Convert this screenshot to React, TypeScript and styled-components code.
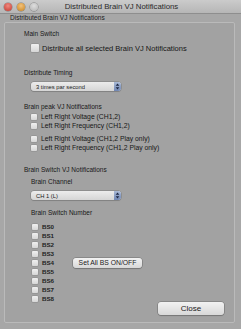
import React from "react";
import styled, { createGlobalStyle } from "styled-components";

const Global = createGlobalStyle`
  html, body { margin: 0; padding: 0; background: #a6a6a6; }
  body { font-family: "Liberation Sans", Arial, sans-serif; color: #1c1c1c; }
`;

const Window = styled.div`
  width: 241px;
  height: 329px;
  display: flex;
  flex-direction: column;
  background: #a7a7a7;
  overflow: hidden;
`;

const TitleBar = styled.div`
  height: 13px;
  display: flex;
  align-items: center;
  position: relative;
  background: linear-gradient(#cbcbcb, #b6b6b6);
  border-bottom: 1px solid #8e8e8e;
  padding-left: 4px;
  gap: 5px;
`;

const Light = styled.span<{ $c: string; $e: string }>`
  width: 8px;
  height: 8px;
  border-radius: 50%;
  background: radial-gradient(circle at 50% 35%, ${(p) => p.$c} 0%, ${(p) => p.$e} 100%);
  box-shadow: 0 0 0 0.5px rgba(60, 60, 60, 0.5);
`;

const Title = styled.div`
  position: absolute;
  left: 0;
  right: 0;
  top: 0;
  height: 13px;
  line-height: 13px;
  text-align: center;
  font-size: 7.8px;
  color: #2a2a2a;
  padding-left: 2px;
`;

const Body = styled.div`
  flex: 1;
  display: flex;
  flex-direction: column;
  padding: 0 6px 6px 4px;
`;

const GroupLabel = styled.div`
  font-size: 6.5px;
  line-height: 8px;
  padding-left: 6px;
  color: #222;
`;

const GroupBox = styled.div`
  flex: 1;
  display: flex;
  flex-direction: column;
  border: 1px solid #bababa;
  border-radius: 2px;
  background: #a2a2a2;
  padding: 6px 10px 5px 19px;
`;

const SectionTitle = styled.div<{ $mt?: number; $indent?: number }>`
  font-size: 6.5px;
  line-height: 10px;
  height: 10px;
  margin-top: ${(p) => p.$mt ?? 0}px;
  padding-left: ${(p) => p.$indent ?? 0}px;
  color: #181818;
`;

const CheckRow = styled.label<{ $mt?: number; $big?: boolean; $indent?: number }>`
  display: flex;
  align-items: center;
  gap: ${(p) => (p.$big ? 3 : 4)}px;
  height: ${(p) => (p.$big ? 10 : 9)}px;
  margin-top: ${(p) => p.$mt ?? 0}px;
  padding-left: ${(p) => p.$indent ?? 7}px;
  font-size: ${(p) => (p.$big ? 7.5 : 6.8)}px;
  color: #161616;
`;

const Box = styled.span<{ $big?: boolean }>`
  width: ${(p) => (p.$big ? 8 : 6)}px;
  height: ${(p) => (p.$big ? 8 : 6)}px;
  flex: none;
  border-radius: 1px;
  background: linear-gradient(#f0f0f0, #d6d6d6);
  box-shadow: 0 0 0 0.5px #8a8a8a;
`;

const Popup = styled.div<{ $mt?: number }>`
  width: 90px;
  height: 9px;
  margin-top: ${(p) => p.$mt ?? 0}px;
  margin-left: 7px;
  display: flex;
  align-items: center;
  border-radius: 3px;
  background: linear-gradient(#ececec, #d5d5d5);
  box-shadow: 0 0 0 0.5px #7a7a7a, 0 1px 1px rgba(0, 0, 0, 0.15);
  overflow: hidden;
`;

const PopupText = styled.span`
  flex: 1;
  font-size: 5.8px;
  padding-left: 5px;
  color: #1a1a1a;
`;

const Stepper = styled.span`
  width: 7px;
  height: 9px;
  background: linear-gradient(#a9b9d6, #6f86b3);
  display: flex;
  align-items: center;
  justify-content: center;
`;

const Group = styled.div<{ $mt?: number }>`
  display: flex;
  flex-direction: column;
  margin-top: ${(p) => p.$mt ?? 0}px;
`;

const SwitchArea = styled.div`
  display: flex;
  align-items: center;
  margin-top: 4px;
`;

const BSList = styled.div`
  display: flex;
  flex-direction: column;
  width: 49px;
`;

const BSRow = styled(CheckRow)`
  font-weight: bold;
  font-size: 6.2px;
  color: #222;
`;

const PushButton = styled.button<{ $w: number; $h: number; $fs: number }>`
  width: ${(p) => p.$w}px;
  height: ${(p) => p.$h}px;
  padding: 0;
  border: none;
  border-radius: 3px;
  font-family: "Liberation Sans", Arial, sans-serif;
  font-size: ${(p) => p.$fs}px;
  color: #1a1a1a;
  background: linear-gradient(#f2f2f2, #d8d8d8);
  box-shadow: 0 0 0 0.5px #6f6f6f, 0 1px 1px rgba(0, 0, 0, 0.2);
`;

const Footer = styled.div`
  display: flex;
  justify-content: flex-end;
  margin-top: -1px;
`;

const switches = ["BS0", "BS1", "BS2", "BS3", "BS4", "BS5", "BS6", "BS7", "BS8"];

function StepArrows() {
  return (
    <svg width="5" height="7" viewBox="0 0 5 7">
      <path d="M2.5 0.6 L4.3 2.8 H0.7 Z" fill="#1b2540" />
      <path d="M2.5 6.4 L4.3 4.2 H0.7 Z" fill="#1b2540" />
    </svg>
  );
}

export default function App() {
  return (
    <>
      <Global />
      <Window>
        <TitleBar>
          <Light $c="#f08a80" $e="#c2352b" />
          <Light $c="#f3c27a" $e="#c8821f" />
          <Light $c="#dedede" $e="#b2b2b2" />
          <Title>Distributed Brain VJ Notifications</Title>
        </TitleBar>
        <Body>
          <GroupLabel>Distributed Brain VJ Notifications</GroupLabel>
          <GroupBox>
            <SectionTitle>Main Switch</SectionTitle>
            <CheckRow $big $mt={4}>
              <Box $big />
              Distribute all selected Brain VJ Notifications
            </CheckRow>

            <SectionTitle $mt={15}>Distribute Timing</SectionTitle>
            <Popup $mt={4}>
              <PopupText>3 times par second</PopupText>
              <Stepper>
                <StepArrows />
              </Stepper>
            </Popup>

            <SectionTitle $mt={11}>Brain peak VJ Notifications</SectionTitle>
            <Group>
              <CheckRow>
                <Box />
                Left Right Voltage (CH1,2)
              </CheckRow>
              <CheckRow>
                <Box />
                Left Right Frequency (CH1,2)
              </CheckRow>
            </Group>
            <Group $mt={4}>
              <CheckRow>
                <Box />
                Left Right Voltage (CH1,2 Play only)
              </CheckRow>
              <CheckRow>
                <Box />
                Left Right Frequency (CH1,2 Play only)
              </CheckRow>
            </Group>

            <SectionTitle $mt={13}>Brain Switch VJ Notifications</SectionTitle>
            <SectionTitle $mt={2} $indent={7}>
              Brain Channel
            </SectionTitle>
            <Popup $mt={4}>
              <PopupText>CH 1 (L)</PopupText>
              <Stepper>
                <StepArrows />
              </Stepper>
            </Popup>
            <SectionTitle $mt={8} $indent={7}>
              Brain Switch Number
            </SectionTitle>
            <SwitchArea>
              <BSList>
                {switches.map((t) => (
                  <BSRow key={t} $indent={8}>
                    <Box />
                    {t}
                  </BSRow>
                ))}
              </BSList>
              <PushButton $w={69} $h={10} $fs={6.8}>
                Set All BS ON/OFF
              </PushButton>
            </SwitchArea>
            <Footer>
              <PushButton $w={66} $h={13} $fs={8}>
                Close
              </PushButton>
            </Footer>
          </GroupBox>
        </Body>
      </Window>
    </>
  );
}
